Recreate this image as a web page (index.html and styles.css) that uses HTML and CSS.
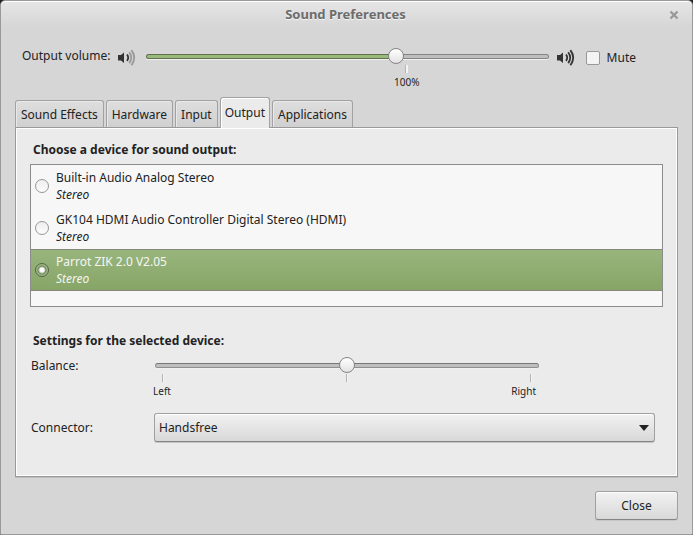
FILE: index.html
```html
<!doctype html>
<html lang="en">
<head>
    <meta charset="UTF-8">
    <title>Sound Preferences</title>
    <meta name="viewport" content="width=device-width, initial-scale=1">
    <link rel="stylesheet" href="styles.css">
</head>
<body>
    <div class="window">
        <header class="titlebar">
            <h1>Sound Preferences</h1>
            <button type="button" class="window-close" aria-label="Close window">
                <svg width="10" height="10" viewBox="0 0 10 10"><path d="M1.5 1.5L8.5 8.5M8.5 1.5L1.5 8.5" stroke="#999" stroke-width="2.4"/></svg>
            </button>
        </header>

        <section class="volume">
            <label for="volume">Output volume:</label>
            <svg class="speaker" width="20" height="18" viewBox="0 0 20 18">
                <path d="M1 6h3L7 3.5V14l-3-2.500H1z" fill="#333"/>
                <g fill="none" stroke="#999" stroke-width="1.8">
                    <path d="M10 5.5q2.4 3.2 0 6.4" stroke="#333"/>
                    <path d="M12.2 3.3q4 5.4 0 10.8"/>
                    <path d="M14.4 1.1q5.6 7.6 0 15.2"/>
                </g>
            </svg>
            <div class="slider">
                <input type="range" id="volume" class="filled" min="0" max="1000" value="627" style="--fill: 62%">
                <div class="mark" style="--at: 65%"><span>100%</span></div>
            </div>
            <svg class="speaker" width="20" height="18" viewBox="0 0 20 18">
                <path d="M1 6h3L7 3.5V14l-3-2.500H1z" fill="#333"/>
                <g fill="none" stroke="#333" stroke-width="1.8">
                    <path d="M10 5.5q2.4 3.2 0 6.4"/>
                    <path d="M12.2 3.3q4 5.4 0 10.8"/>
                    <path d="M14.4 1.1q5.6 7.6 0 15.2"/>
                </g>
            </svg>
            <label class="mute"><input type="checkbox" name="mute">Mute</label>
        </section>

        <nav class="tabs" role="tablist">
            <button type="button" role="tab">Sound Effects</button>
            <button type="button" role="tab">Hardware</button>
            <button type="button" role="tab">Input</button>
            <button type="button" role="tab" class="active" aria-selected="true">Output</button>
            <button type="button" role="tab">Applications</button>
        </nav>

        <main class="panel">
            <h2>Choose a device for sound output:</h2>
            <div class="devices">
                <label class="device">
                    <input type="radio" name="device">
                    <span>Built-in Audio Analog Stereo<br><em>Stereo</em></span>
                </label>
                <label class="device">
                    <input type="radio" name="device">
                    <span>GK104 HDMI Audio Controller Digital Stereo (HDMI)<br><em>Stereo</em></span>
                </label>
                <label class="device selected">
                    <input type="radio" name="device" checked>
                    <span>Parrot ZIK 2.0 V2.05<br><em>Stereo</em></span>
                </label>
            </div>

            <h2>Settings for the selected device:</h2>
            <div class="settings">
                <label for="balance">Balance:</label>
                <div class="slider balance">
                    <input type="range" id="balance" min="-100" max="100" value="0">
                    <div class="ticks"><i></i><i></i><i></i></div>
                    <div class="tick-labels"><span>Left</span><span>Right</span></div>
                </div>
                <label for="connector">Connector:</label>
                <div class="select">
                    <select id="connector">
                        <option>Handsfree</option>
                    </select>
                    <svg width="10" height="6" viewBox="0 0 10 6"><path d="M0 0h10L5 6z" fill="#222"/></svg>
                </div>
            </div>
        </main>

        <footer class="actions">
            <button type="button" class="button">Close</button>
        </footer>
    </div>
</body>
</html>
```

FILE: styles.css
```css
* {
    box-sizing: border-box;
}
body {
    margin: 0;
    background-color: #222;
    color: #222;
    font-family: "Noto Sans", sans-serif;
    font-size: 12px;
    line-height: 17px;
}
input, select, button {
    margin: 0;
    color: inherit;
    font: inherit;
}
svg {
    display: block;
}

/* window */
.window {
    display: flex;
    flex-direction: column;
    min-height: 100vh;
    border: 1px solid #999;
    border-radius: 5px 5px 0 0;
    background: linear-gradient(#e6e6e6, #d6d6d6 26px);
    box-shadow: inset 0 1px #fff;
}
.titlebar {
    display: flex;
    align-items: center;
    height: 27px;
    padding: 0 13px 0 21px;
}
.titlebar h1 {
    flex: 1;
    margin: 0;
    color: #6c6c6c;
    font-size: 13px;
    text-align: center;
    text-shadow: 0 1px #f4f4f4;
}
.window-close {
    padding: 0;
    border: none;
    background: none;
}

/* sliders */
input[type="range"] {
    display: block;
    width: 100%;
    height: 16px;
    background: none;
    -webkit-appearance: none;
    appearance: none;
}
input[type="range"]::-webkit-slider-runnable-track {
    height: 5px;
    border: 1px solid #8f8f8f;
    border-top-color: #777;
    border-radius: 3px;
    background-color: #bebfbe;
    box-shadow: 0 1px #f0f0f0;
}
/* second layer shows through the transparent border */
input.filled::-webkit-slider-runnable-track {
    border-color: transparent;
    background:
        linear-gradient(to right, #9aba7c var(--fill), #bebfbe var(--fill)) padding-box,
        linear-gradient(to right, #5f714e var(--fill), #858585 var(--fill)) border-box;
}
input[type="range"]::-webkit-slider-thumb {
    width: 16px;
    height: 16px;
    margin-top: -7px;
    border: 1px solid #858585;
    border-radius: 50%;
    background: linear-gradient(#fff, #e2e2e2);
    -webkit-appearance: none;
    appearance: none;
}
.mark {
    display: flex;
    flex-direction: column;
    align-items: center;
    gap: 1px;
    width: 30px;
    margin-left: calc(var(--at) - 16px);
    padding-top: 1px;
    font-size: 10px;
}
.mark::before, .ticks i {
    content: "";
    width: 2px;
    height: 8px;
    border-left: 1px solid #b4b4b4;
    background-color: #f4f4f4;
}

/* volume row */
.volume {
    display: flex;
    align-items: flex-start;
    padding: 19px 56px 0 21px;
}
.volume > label {
    white-space: nowrap;
}
.volume .speaker {
    margin: 2px 9px 0 7px;
}
.volume .slider {
    flex: 1;
    margin-top: 1px;
}
.mute {
    display: flex;
    align-items: center;
    gap: 7px;
    margin: 2px 0 0 1px;
}
.mute input {
    width: 14px;
    height: 14px;
    border: 1px solid #999;
    border-radius: 2px;
    background-color: #f4f4f4;
    -webkit-appearance: none;
    appearance: none;
}

/* tabs */
.tabs {
    display: flex;
    align-items: flex-end;
    gap: 2px;
    padding: 0 14px;
    margin-top: 6px;
}
.tabs button {
    height: 27px;
    padding: 1px 5px 0;
    border: 1px solid #a2a2a2;
    border-bottom: none;
    border-radius: 3px 3px 0 0;
    background: linear-gradient(#dedede, #d0d0d0);
    box-shadow: inset 1px 1px #e8e8e8;
}
.tabs .active {
    position: relative;
    height: 31px;
    margin-bottom: -1px;
    padding: 1px 4px 2px;
    background: #ebebeb;
    box-shadow: inset 1px 1px #fff;
}

/* panel */
.panel {
    flex: 1;
    margin: 0 14px;
    padding: 13px 14px;
    border: 1px solid #999;
    background-color: #ebebeb;
    box-shadow: inset 0 0 0 1px #fff, 0 1px #bdbdbd;
}
.panel h2 {
    margin: 0 3px 6px;
    font-size: 12px;
    line-height: 17px;
}
.devices {
    height: 143px;
    margin-bottom: 25px;
    border: 1px solid #8c8c8c;
    background-color: #f7f7f7;
}
.device {
    display: flex;
    align-items: center;
    gap: 7px;
    height: 42px;
    padding: 0 4px;
}
.device.selected {
    border: solid #85877f;
    border-width: 1px 0;
    background: linear-gradient(#98b67c, #87a566);
    color: #f5f5f5;
}
.device input {
    width: 14px;
    height: 14px;
    border: 1px solid #969696;
    border-radius: 50%;
    background: linear-gradient(#eee, #fcfcfc);
    -webkit-appearance: none;
    appearance: none;
}
.device input:checked {
    border-color: #56624a;
    background: radial-gradient(#fff 2px, #6e8458 4px, #9cb783 5px);
}
.settings {
    display: grid;
    grid-template-columns: 123px 1fr;
    align-items: start;
    row-gap: 13px;
    padding: 2px 8px 0 1px;
}
.balance {
    padding: 0 116px 0 1px;
    font-size: 10px;
}
.ticks, .tick-labels {
    display: flex;
    justify-content: space-between;
}
.ticks {
    padding: 1px 7px;
}
.tick-labels {
    margin: 0 3px 0 -2px;
}
.settings label[for="connector"] {
    padding-top: 6px;
}
.select {
    display: grid;
    align-items: center;
}
.select select, .select svg {
    grid-area: 1 / 1;
}
.select svg {
    justify-self: end;
    margin-right: 6px;
    pointer-events: none;
}
.select select, .button {
    height: 29px;
    padding: 0 4px;
    border: 1px solid #a0a0a0;
    border-bottom-color: #858585;
    border-radius: 3px;
    background: linear-gradient(#f2f2f2, #d8d8d8);
    box-shadow: inset 0 1px #fff, 0 1px #c6c6c6;
    -webkit-appearance: none;
    appearance: none;
}

/* bottom bar */
.actions {
    display: flex;
    justify-content: flex-end;
    padding: 14px;
}
.button {
    min-width: 83px;
}
```
